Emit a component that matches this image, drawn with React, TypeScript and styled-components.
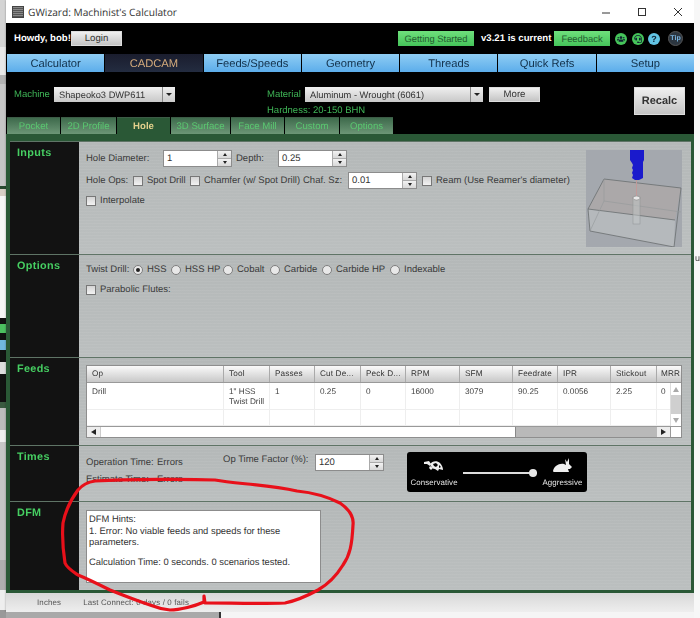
import React from "react";
import styled, { createGlobalStyle } from "styled-components";
import { FaUsers, FaHeadset } from "react-icons/fa";

const Global = createGlobalStyle`
  html, body { margin: 0; padding: 0; background: #f6f6f6; }
  body { width: 700px; height: 618px; overflow: hidden; font-family: "Liberation Sans", Arial, sans-serif; text-rendering: geometricPrecision; }
  * { box-sizing: border-box; }
`;

const Page = styled.div`
  position: relative;
  width: 700px;
  height: 618px;
  display: grid;
  grid-template-columns: 6px 688px 6px;
  grid-template-rows: 612px 6px;
  overflow: hidden;
  filter: blur(0.4px);
`;
const LeftStrip = styled.div`
  grid-row: 1 / 3;
  display: flex;
  flex-direction: column;
`;
const StripPart = styled.div<{ $h: number; $c: string }>`
  height: ${(p) => p.$h}px;
  background: ${(p) => p.$c};
`;
const RightStrip = styled.div`
  grid-row: 1 / 3;
  grid-column: 3;
  background: #f7f7f7;
  padding-top: 253px;
  font-size: 9px;
  color: #444;
  overflow: hidden;
  padding-left: 1px;
`;
const BelowWindow = styled.div`
  grid-column: 2;
  grid-row: 2;
  display: flex;
  background: #f5f5f5;
`;
const BelowGrey = styled.div`
  width: 215px;
  background: #a9a9a9;
  border-right: 2px solid #333;
`;
const Window = styled.div`
  display: flex;
  flex-direction: column;
  background: #000;
  box-shadow: 0 0 2px rgba(0, 0, 0, 0.35);
`;
const TitleBar = styled.div`
  height: 23px;
  background: #fff;
  display: flex;
  align-items: center;
  padding-left: 6px;
  color: #333;
  font-family: "Open Sans", sans-serif;
  font-size: 10.2px;
`;
const AppIcon = styled.div`
  width: 12px;
  height: 12px;
  margin-right: 4px;
  background: repeating-linear-gradient(0deg, #555 0 1px, #888 1px 2px);
  border: 1px solid #444;
`;
const WinButtons = styled.div`
  margin-left: auto;
  display: flex;
  align-items: center;
  padding-right: 11px;
  gap: 26px;
`;
const Header = styled.div`
  height: 111px;
  background: #000;
  display: flex;
  flex-direction: column;
`;
const TopRow = styled.div`
  height: 31px;
  display: flex;
  align-items: center;
  padding: 0 11px 0 8px;
  color: #fff;
  font-size: 9.6px;
  font-weight: bold;
  white-space: nowrap;
`;
const Slot = styled.div<{ $w: number }>`
  width: ${(p) => p.$w}px;
  flex: none;
`;
const GreyButton = styled.div<{ $w: number; $h?: number; $big?: boolean }>`
  width: ${(p) => p.$w}px;
  height: ${(p) => p.$h ?? 15}px;
  flex: none;
  display: flex;
  align-items: center;
  justify-content: center;
  background: linear-gradient(#f0f0f0, #c4c4c4);
  color: #333;
  font-size: ${(p) => (p.$big ? "11px" : "9.6px")};
  font-weight: ${(p) => (p.$big ? "bold" : "normal")};
  border: 1px solid #ddd;
`;
const GreenButton = styled.div<{ $w: number }>`
  width: ${(p) => p.$w}px;
  height: 15px;
  flex: none;
  display: flex;
  align-items: center;
  justify-content: center;
  background: linear-gradient(#6fe07c, #45c45a);
  color: #245c30;
  font-size: 9.4px;
  font-weight: normal;
`;
const Round = styled.div<{ $bg: string; $c?: string }>`
  width: 12px;
  height: 12px;
  flex: none;
  border-radius: 50%;
  background: ${(p) => p.$bg};
  color: ${(p) => p.$c ?? "#000"};
  display: flex;
  align-items: center;
  justify-content: center;
  font-size: 9px;
  font-weight: bold;
`;
const TipRound = styled(Round)`
  width: 15px;
  height: 15px;
  font-size: 7px;
  border: 1px solid #555;
`;
const Nav = styled.div`
  height: 18px;
  display: grid;
  grid-template-columns: repeat(7, 1fr);
  margin-left: 1px;
  column-gap: 1px;
`;
const NavTab = styled.div<{ $active?: boolean }>`
  display: flex;
  align-items: center;
  justify-content: center;
  padding-top: 1px;
  font-size: 11.2px;
  background: ${(p) =>
    p.$active ? "linear-gradient(#1a1d2e, #232c40)" : "linear-gradient(#8fcdf4, #5cadeb)"};
  color: ${(p) => (p.$active ? "#d4ab7c" : "#12304a")};
`;
const ControlRow = styled.div`
  height: 45px;
  display: flex;
  align-items: flex-start;
  padding: 15px 8px 0 8px;
`;
const GreenText = styled.div<{ $w?: number }>`
  color: #3fb657;
  font-size: 9.5px;
  line-height: 15px;
  flex: none;
  ${(p) => (p.$w ? `width: ${p.$w}px;` : "")}
`;
const Select = styled.div<{ $w: number }>`
  width: ${(p) => p.$w}px;
  height: 15px;
  flex: none;
  display: flex;
  align-items: center;
  justify-content: space-between;
  background: linear-gradient(#f0f0f0, #c8c8c8);
  color: #333;
  font-size: 9.3px;
  padding-left: 5px;
`;
const SelectArrow = styled.div`
  width: 13px;
  height: 100%;
  border-left: 1px solid #888;
  background: linear-gradient(#eee, #ccc);
  display: flex;
  align-items: center;
  justify-content: center;
  &::after {
    content: "";
    border-left: 3px solid transparent;
    border-right: 3px solid transparent;
    border-top: 3px solid #222;
  }
`;
const MaterialCol = styled.div`
  display: flex;
  flex-direction: column;
`;
const MaterialRow = styled.div`
  display: flex;
  align-items: center;
  height: 15px;
`;
const HardText = styled(GreenText)`
  margin-top: 1px;
  line-height: 16px;
`;
const SubTabs = styled.div`
  height: 17px;
  display: flex;
  padding-left: 1px;
  gap: 1px;
`;
const SubTab = styled.div<{ $w: number; $active?: boolean }>`
  width: ${(p) => p.$w}px;
  display: flex;
  align-items: center;
  justify-content: center;
  font-size: 9.6px;
  font-weight: ${(p) => (p.$active ? "bold" : "normal")};
  color: ${(p) => (p.$active ? "#e2d08c" : "#5ac870")};
  background: ${(p) => (p.$active ? "#2a5836" : "linear-gradient(#3e6a4c, #6c9676)")};
  border-top: 1px solid #3c5c46;
`;
const Frame = styled.div`
  height: 459px;
  background: #2a5836;
  padding: 7px 3px 3px 4px;
  display: flex;
  flex-direction: column;
`;
const Section = styled.section<{ $h: number }>`
  height: ${(p) => p.$h}px;
  display: grid;
  grid-template-columns: 69px 1fr;
  border-top: 1px solid #5f7466;
`;
const SectionLabel = styled.div`
  background: #121212;
  color: #46cf62;
  font-size: 10.8px;
  font-weight: bold;
  letter-spacing: 0.35px;
  padding: 5px 0 0 7px;
`;
const Panel = styled.div<{ $pt: number }>`
  padding: ${(p) => p.$pt}px 0 0 7px;
  background:
    repeating-linear-gradient(0deg, rgba(255, 255, 255, 0.05) 0 1px, transparent 1px 3px),
    linear-gradient(#b4b8b8, #bbbfbf);
  color: #3a3a3a;
  font-size: 9.5px;
  position: relative;
  display: flex;
  flex-direction: column;
`;
const InputsBody = styled.div`
  display: flex;
  justify-content: space-between;
  padding-right: 9px;
`;
const Rows = styled.div`
  display: flex;
  flex-direction: column;
`;
const Row = styled.div<{ $h: number }>`
  height: ${(p) => p.$h}px;
  display: flex;
  align-items: center;
`;
const Label = styled.span<{ $w?: number }>`
  flex: none;
  ${(p) => (p.$w ? `width: ${p.$w}px;` : "")}
  white-space: nowrap;
`;
const SpinBox = styled.div`
  width: 69px;
  height: 17px;
  flex: none;
  display: flex;
  background: #fff;
  border: 1px solid #8c8c8c;
  color: #333;
  font-size: 9.5px;
  line-height: 15px;
  padding-left: 3px;
  justify-content: space-between;
`;
const SpinArrows = styled.div`
  width: 14px;
  display: flex;
  flex-direction: column;
  border-left: 1px solid #aaa;
`;
const SpinArrow = styled.div<{ $down?: boolean }>`
  flex: 1;
  background: linear-gradient(#f2f2f2, #d8d8d8);
  display: flex;
  align-items: center;
  justify-content: center;
  &::after {
    content: "";
    border-left: 2px solid transparent;
    border-right: 2px solid transparent;
    ${(p) => (p.$down ? "border-top: 3px solid #222;" : "border-bottom: 3px solid #222;")}
  }
  & + & { border-top: 1px solid #aaa; }
`;
const Check = styled.span`
  width: 10px;
  height: 10px;
  flex: none;
  margin-right: 4px;
  background: linear-gradient(#d4d4d4, #f2f2f2);
  border: 1px solid #777;
`;
const Radio = styled.span<{ $on?: boolean }>`
  width: 10px;
  height: 10px;
  flex: none;
  margin-right: 4px;
  border-radius: 50%;
  border: 1px solid #7e7e7e;
  background: #e8e8e8;
  display: flex;
  align-items: center;
  justify-content: center;
  &::after {
    content: "";
    width: 4px;
    height: 4px;
    border-radius: 50%;
    background: ${(p) => (p.$on ? "#222" : "transparent")};
  }
`;
const Picture = styled.svg`
  width: 96px;
  height: 97px;
  flex: none;
  display: block;
`;
const TableBox = styled.div`
  width: 596px;
  height: 73px;
  background: #fff;
  border: 1px solid #8e8e8e;
  display: flex;
  flex-direction: column;
  font-size: 8.2px;
  color: #444;
`;
const HeaderRow = styled.div`
  height: 17px;
  flex: none;
  display: grid;
  grid-template-columns: 137px 46px 45px 46px 45px 54px 53px 45px 53px 46px 1fr;
  background: linear-gradient(#fafafa, #c8c8c8);
  border-bottom: 1px solid #999;
  font-weight: normal;
  color: #333;
  letter-spacing: 0.15px;
`;
const HeaderCell = styled.div`
  padding: 0 0 0 5px;
  line-height: 16px;
  border-right: 1px solid #aaa;
  white-space: nowrap;
  overflow: hidden;
  &:last-child { border-right: 0; padding-left: 4px; }
`;
const BodyWrap = styled.div`
  height: 44px;
  flex: none;
  display: flex;
  border-bottom: 1px solid #999;
`;
const BodyRows = styled.div`
  flex: 1;
  display: flex;
  flex-direction: column;
`;
const DataRow = styled.div<{ $h: number }>`
  height: ${(p) => p.$h}px;
  display: grid;
  grid-template-columns: 137px 46px 45px 46px 45px 54px 53px 45px 53px 46px 1fr;
  border-bottom: 1px solid #eee;
`;
const DataCell = styled.div`
  padding: 4px 0 0 5px;
  line-height: 10px;
  border-right: 1px solid #eee;
  &:last-child { border-right: 0; padding-left: 4px; }
`;
const VScroll = styled.div`
  width: 11px;
  flex: none;
  display: flex;
  flex-direction: column;
  background: #f2f2f2;
  border-left: 1px solid #ddd;
`;
const VArrow = styled.div<{ $down?: boolean }>`
  height: 12px;
  display: flex;
  align-items: center;
  justify-content: center;
  background: #fff;
  &::after {
    content: "";
    border-left: 3px solid transparent;
    border-right: 3px solid transparent;
    ${(p) => (p.$down ? "border-top: 5px solid #aaa;" : "border-bottom: 5px solid #aaa;")}
  }
`;
const VThumb = styled.div`
  flex: 1;
  background: #cfcfcf;
`;
const HScroll = styled.div`
  height: 10px;
  flex: none;
  display: flex;
  background: #b9b9b9;
`;
const HArrow = styled.div<{ $right?: boolean }>`
  width: 13px;
  flex: none;
  background: #ededed;
  display: flex;
  align-items: center;
  justify-content: center;
  &::after {
    content: "";
    border-top: 3px solid transparent;
    border-bottom: 3px solid transparent;
    ${(p) => (p.$right ? "border-left: 5px solid #222;" : "border-right: 5px solid #222;")}
  }
`;
const HThumb = styled.div`
  width: 416px;
  background: #fff;
  border-right: 1px solid #888;
  border-left: 1px solid #ccc;
`;
const HTrack = styled.div`
  flex: 1;
`;
const Corner = styled.div`
  width: 11px;
  background: #fff;
  border-left: 1px solid #999;
`;
const TimesBody = styled.div`
  display: flex;
`;
const TimesCol = styled.div`
  width: 137px;
  flex: none;
  line-height: 17px;
`;
const TimesText = styled.div`
  display: flex;
  height: 17px;
  white-space: nowrap;
`;
const SliderBox = styled.div`
  width: 180px;
  height: 40px;
  margin: -2px 0 0 23px;
  background: #000;
  border-radius: 3px;
  display: grid;
  grid-template-columns: 50px 82px 43px;
  align-items: center;
  padding: 0 3px 0 2px;
`;
const AnimalCol = styled.div`
  display: flex;
  flex-direction: column;
  align-items: center;
  padding-top: 4px;
  font-size: 7.9px;
  color: #e6e6e6;
  line-height: 11px;
  letter-spacing: 0.1px;
  gap: 4.5px;
  white-space: nowrap;
`;
const AnimalIcon = styled.svg`
  height: 12px;
  flex: none;
  overflow: visible;
`;
const Track = styled.div`
  height: 2px;
  margin: 2px 0 0 4px;
  background: #ddd;
  position: relative;
  width: 74px;
`;
const Thumb = styled.div`
  position: absolute;
  right: 0;
  top: -3px;
  width: 8px;
  height: 8px;
  border-radius: 50%;
  background: #e8e8e8;
`;
const Hints = styled.div`
  width: 235px;
  height: 73px;
  background: #fff;
  border: 1px solid #8c8c8c;
  padding: 2px;
  color: #333;
  font-size: 9.4px;
  line-height: 11.6px;
`;
const HintLine = styled.div<{ $mt?: number }>`
  margin-top: ${(p) => p.$mt ?? 0}px;
`;
const StatusBar = styled.div`
  height: 19px;
  background: linear-gradient(#d8d8d8, #eee);
  display: flex;
  align-items: center;
  color: #555;
  font-size: 7.9px;
  padding-left: 31px;
  letter-spacing: 0.15px;
`;
const Scribble = styled.svg`
  position: absolute;
  left: 0;
  top: 0;
  width: 700px;
  height: 618px;
  pointer-events: none;
`;

const left: [number, string][] = [
  [47, "#d4d4d4"], [28, "#e8e8e8"], [9, "#b2b2b2"], [102, "#c6c6c6"], [3, "#2a4a30"], [7, "#d8cfc6"],
  [122, "#f6f6f6"], [6, "#111"], [9, "#4cc060"], [7, "#111"], [10, "#70b8e0"], [12, "#111"],
  [12, "#ddd"], [28, "#111"], [6, "#3a5a40"], [22, "#bcbcbc"], [12, "#eee"], [118, "#c6c6c6"],
  [30, "#aeaeae"], [20, "#eee"], [8, "#999"],
];
const navTabs = ["Calculator", "CADCAM", "Feeds/Speeds", "Geometry", "Threads", "Quick Refs", "Setup"];
const subTabs: [string, number][] = [
  ["Pocket", 53], ["2D Profile", 55], ["Hole", 53], ["3D Surface", 59], ["Face Mill", 53], ["Custom", 54], ["Options", 53],
];
const heads = ["Op", "Tool", "Passes", "Cut De...", "Peck D...", "RPM", "SFM", "Feedrate", "IPR", "Stickout", "MRR"];
const rowOne = ["Drill", "1\" HSS Twist Drill", "1", "0.25", "0", "16000", "3079", "90.25", "0.0056", "2.25", "0"];

const Spin = ({ v }: { v: string }) => (
  <SpinBox>
    {v}
    <SpinArrows>
      <SpinArrow />
      <SpinArrow $down />
    </SpinArrows>
  </SpinBox>
);

const Drill = () => (
  <Picture viewBox="0 0 96 97">
    <rect width="96" height="97" fill="#a4a8ae" />
    <path d="M18 29 L95 38 L89 70 L2 59 Z" fill="#b0a8a6" opacity="0.55" />
    <path d="M2 59 L89 70 L88 97 L4 81 Z" fill="#bcc0c2" opacity="0.7" />
    <path d="M18 29 L95 38 L88 97 L4 81 L2 59 Z M2 59 L89 70" fill="none" stroke="#6a6e70" strokeWidth="0.8" />
    <path d="M18 29 L18 51 L95 62 M18 51 L4 81" fill="none" stroke="#94989a" strokeWidth="0.6" />
    <rect x="47" y="47" width="7" height="27" fill="#c4c8c8" fillOpacity="0.5" stroke="#8e9294" strokeWidth="0.5" />
    <ellipse cx="50.5" cy="48" rx="3.5" ry="2" fill="#e8e8e8" stroke="#777" strokeWidth="0.5" />
    <path d="M50.5 29 V46" stroke="#c09a9a" strokeWidth="1" />
    <path d="M44 0 H58 V10 L57 12 V28 L53 30 H49 L46 28 L47 25 L46 23 L47 20 L46 18 L47 15 L46 13 L44 10 Z" fill="#1a1acc" />
  </Picture>
);

const Turtle = () => (
  <AnimalIcon width="20" viewBox="0 0 20 12">
    <path d="M6 4 C8 1 13 0 16 3 C18 5 19 8 19 10 L15 9 L14 11 L11 9 C9 9 7 7 6 4 Z" fill="#eee" />
    <path d="M9 4 L12 3 L14 5 L12 7 L10 6 Z M15 5 L17 7 L15 8 Z" fill="#000" />
    <path d="M0 2 L5 1 L7 4 L6 6 L3 4 L0 4 Z" fill="#eee" />
    <path d="M6 6 L9 8 L7 10 L5 8 Z" fill="#eee" />
  </AnimalIcon>
);

const Rabbit = () => (
  <AnimalIcon width="20" viewBox="0 1 20 12">
    <path d="M0 12 C1 7 6 4 11 5 L13 6 L12 0 L14 3 L16 -1 L16 5 L19 8 L17 10 L15 10 L16 13 L3 13 C1 13 0 13 0 12 Z" fill="#eee" />
  </AnimalIcon>
);

export default function App() {
  return (
    <>
      <Global />
      <Page>
        <LeftStrip>
          {left.map(([h, c], i) => (
            <StripPart key={i} $h={h} $c={c} />
          ))}
        </LeftStrip>
        <Window>
          <TitleBar>
            <AppIcon />
            GWizard: Machinist's Calculator
            <WinButtons>
              <svg width="10" height="10" viewBox="0 0 10 10"><path d="M1 6H9" stroke="#333" strokeWidth="1" /></svg>
              <svg width="10" height="10" viewBox="0 0 10 10"><rect x="1.5" y="1.5" width="7" height="7" fill="none" stroke="#333" /></svg>
              <svg width="10" height="10" viewBox="0 0 10 10"><path d="M1 1L9 9M9 1L1 9" stroke="#333" strokeWidth="1" /></svg>
            </WinButtons>
          </TitleBar>
          <Header>
            <TopRow>
              <Slot $w={57}>Howdy, bob!</Slot>
              <GreyButton $w={51}>Login</GreyButton>
              <Slot $w={276} />
              <GreenButton $w={76}>Getting Started</GreenButton>
              <Slot $w={7} />
              <Slot $w={73}>v3.21 is current</Slot>
              <GreenButton $w={56}>Feedback</GreenButton>
              <Slot $w={5} />
              <Round $bg="#46c45a" $c="#123"><FaUsers size={8} /></Round>
              <Slot $w={5} />
              <Round $bg="#46c45a" $c="#123"><FaHeadset size={8} /></Round>
              <Slot $w={4} />
              <Round $bg="#62c4e4" $c="#123">?</Round>
              <Slot $w={8} />
              <TipRound $bg="#2c3640" $c="#7ab4e0">Tip</TipRound>
            </TopRow>
            <Nav>
              {navTabs.map((t) => (
                <NavTab key={t} $active={t === "CADCAM"}>{t}</NavTab>
              ))}
            </Nav>
            <ControlRow>
              <GreenText $w={40}>Machine</GreenText>
              <Select $w={121}>Shapeoko3 DWP611<SelectArrow /></Select>
              <Slot $w={92} />
              <MaterialCol>
                <MaterialRow>
                  <GreenText $w={38}>Material</GreenText>
                  <Select $w={178}>Aluminum - Wrought (6061)<SelectArrow /></Select>
                  <Slot $w={6} />
                  <GreyButton $w={51}>More</GreyButton>
                </MaterialRow>
                <HardText>Hardness: 20-150 BHN</HardText>
              </MaterialCol>
              <Slot $w={94} />
              <GreyButton $w={51} $h={28} $big>Recalc</GreyButton>
            </ControlRow>
            <SubTabs>
              {subTabs.map(([t, w]) => (
                <SubTab key={t} $w={w} $active={t === "Hole"}>{t}</SubTab>
              ))}
            </SubTabs>
          </Header>
          <Frame>
            <Section $h={113}>
              <SectionLabel>Inputs</SectionLabel>
              <Panel $pt={8}>
                <InputsBody>
                  <Rows>
                    <Row $h={17}>
                      <Label $w={77}>Hole Diameter:</Label>
                      <Spin v="1" />
                      <Slot $w={4} />
                      <Label $w={42}>Depth:</Label>
                      <Spin v="0.25" />
                    </Row>
                    <Row $h={5} />
                    <Row $h={17}>
                      <Label $w={47}>Hole Ops:</Label>
                      <Check /><Label $w={43}>Spot Drill</Label>
                      <Check /><Label $w={99}>Chamfer (w/ Spot Drill)</Label>
                      <Label $w={45}>Chaf. Sz:</Label>
                      <Spin v="0.01" />
                      <Slot $w={5} />
                      <Check /><Label>Ream (Use Reamer's diameter)</Label>
                    </Row>
                    <Row $h={3} />
                    <Row $h={17}>
                      <Check /><Label>Interpolate</Label>
                    </Row>
                  </Rows>
                  <Drill />
                </InputsBody>
              </Panel>
            </Section>
            <Section $h={103}>
              <SectionLabel>Options</SectionLabel>
              <Panel $pt={6}>
                <Row $h={17}>
                  <Label $w={47}>Twist Drill:</Label>
                  <Radio $on /><Label $w={24}>HSS</Label>
                  <Radio /><Label $w={38}>HSS HP</Label>
                  <Radio /><Label $w={33}>Cobalt</Label>
                  <Radio /><Label $w={38}>Carbide</Label>
                  <Radio /><Label $w={54}>Carbide HP</Label>
                  <Radio /><Label>Indexable</Label>
                </Row>
                <Row $h={3} />
                <Row $h={17}>
                  <Check /><Label>Parabolic Flutes:</Label>
                </Row>
              </Panel>
            </Section>
            <Section $h={88}>
              <SectionLabel>Feeds</SectionLabel>
              <Panel $pt={7}>
                <TableBox>
                  <HeaderRow>
                    {heads.map((h) => <HeaderCell key={h}>{h}</HeaderCell>)}
                  </HeaderRow>
                  <BodyWrap>
                    <BodyRows>
                      <DataRow $h={28}>
                        {rowOne.map((c, i) => <DataCell key={i}>{c}</DataCell>)}
                      </DataRow>
                      <DataRow $h={16}>
                        {rowOne.map((c, i) => <DataCell key={i} />)}
                      </DataRow>
                    </BodyRows>
                    <VScroll>
                      <VArrow />
                      <VThumb />
                      <VArrow $down />
                    </VScroll>
                  </BodyWrap>
                  <HScroll>
                    <HArrow />
                    <HThumb />
                    <HTrack />
                    <HArrow $right />
                    <Corner />
                  </HScroll>
                </TableBox>
              </Panel>
            </Section>
            <Section $h={56}>
              <SectionLabel>Times</SectionLabel>
              <Panel $pt={8}>
                <TimesBody>
                  <TimesCol>
                    <TimesText><Label $w={71}>Operation Time:</Label>Errors</TimesText>
                    <TimesText><Label $w={71}>Estimate Time:</Label>Errors</TimesText>
                  </TimesCol>
                  <Label $w={92}>Op Time Factor (%):</Label>
                  <Spin v="120" />
                  <SliderBox>
                    <AnimalCol>
                      <Turtle />
                      Conservative
                    </AnimalCol>
                    <Track><Thumb /></Track>
                    <AnimalCol>
                      <Rabbit />
                      Aggressive
                    </AnimalCol>
                  </SliderBox>
                </TimesBody>
              </Panel>
            </Section>
            <Section $h={89}>
              <SectionLabel>DFM</SectionLabel>
              <Panel $pt={8}>
                <Hints>
                  <HintLine>DFM Hints:</HintLine>
                  <HintLine>1. Error: No viable feeds and speeds for these</HintLine>
                  <HintLine>parameters.</HintLine>
                  <HintLine $mt={8.5}>Calculation Time: 0 seconds. 0 scenarios tested.</HintLine>
                </Hints>
              </Panel>
            </Section>
          </Frame>
          <StatusBar>
            Inches
            <Slot $w={22} />
            Last Connect: 0 days / 0 fails
          </StatusBar>
        </Window>
        <RightStrip>u</RightStrip>
        <BelowWindow>
          <BelowGrey />
        </BelowWindow>
        <Scribble viewBox="0 0 700 618">
          <path
            d="M95 481 C130 479 190 479 215 480 C235 484 265 484 297 491 C317 493 330 498 340 503 C350 510 354 517 353 525 C352 545 350 555 343 565 C335 578 325 586 318 590 C305 597 295 601 285 603 C260 604 230 603 205 603 L204 596 L204 602 C195 606 180 610 170 610 C160 609 155 607 150 605 C135 600 120 594 110 590 C98 584 88 579 78 575 C72 571 67 568 65 563 C63 550 62 535 63 523 C66 508 72 498 78 490 C83 484 88 482 95 481 Z"
            fill="none"
            stroke="#e8101a"
            strokeWidth="3.2"
            strokeLinejoin="round"
          />
        </Scribble>
      </Page>
    </>
  );
}
